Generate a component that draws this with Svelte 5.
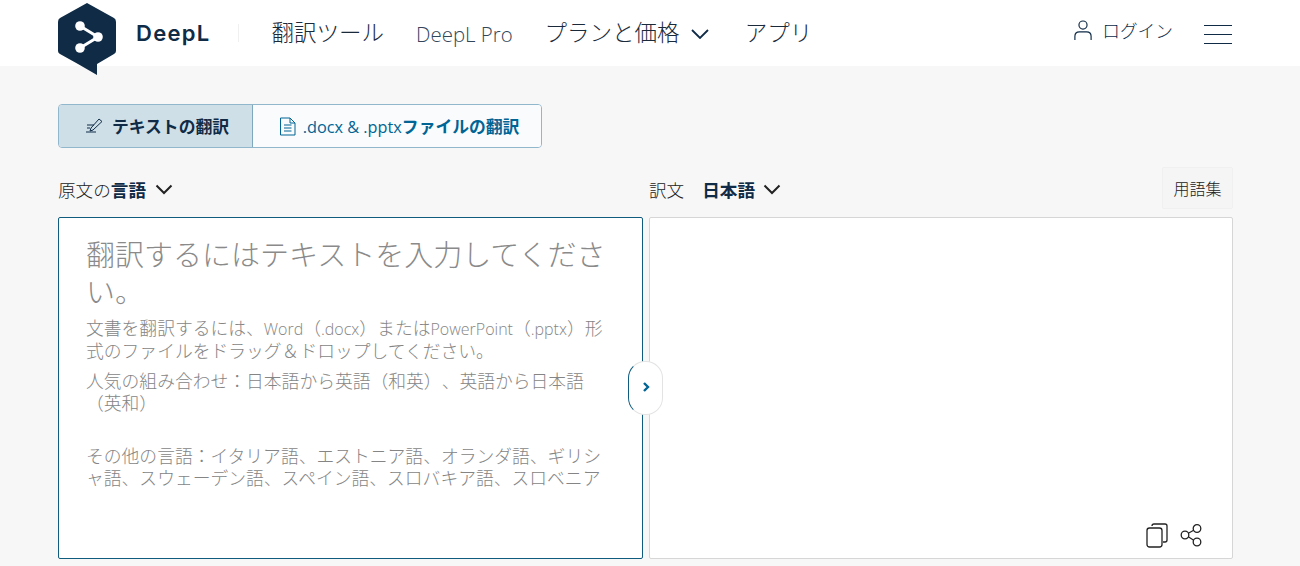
<script>
    const langs = 'その他の言語\uFF1Aイタリア語、エストニア語、オランダ語、ギリシャ語、スウェーデン語、スペイン語、スロバキア語、スロベニア';
    const popular = '人気の組み合わせ\uFF1A日本語から英語\uFF08和英\uFF09、英語から日本語\uFF08英和\uFF09';
</script>

<div class="page">
    <header class="topbar">
        <div class="brand">
            <svg class="logo" viewBox="0 0 58 72" width="58" height="72">
                <path d="M29 0 L56 15 Q58 16 58 19 V48 Q58 50 56 51 L39 61 V72 L20 61 L2 51 Q0 50 0 48 V19 Q0 16 2 15 Z" fill="#0f2b46"/>
                <path d="M22 23 L40 34 L22 45" fill="none" stroke="#fff" stroke-width="3"/>
                <circle cx="22" cy="23" r="4.800" fill="#fff"/>
                <circle cx="40" cy="34" r="4.800" fill="#fff"/>
                <circle cx="22" cy="45" r="4.800" fill="#fff"/>
            </svg>
            <span class="brand-name">DeepL</span>
        </div>
        <nav class="nav">
            <span class="nav-item">翻訳ツール</span>
            <span class="nav-item pro">DeepL Pro</span>
            <span class="nav-item plans">プランと価格
                <svg width="18" height="10" viewBox="0 0 18 10"><path d="M1 1 L9 9 L17 1" fill="none" stroke="#0f2b46" stroke-width="1.800"/></svg>
            </span>
            <span class="nav-item apps">アプリ</span>
        </nav>
        <div class="account">
            <svg width="18" height="22" viewBox="0 0 20 24">
                <circle cx="10" cy="6.500" r="4.500" fill="none" stroke="#0f2b46" stroke-width="1.300"/>
                <path d="M1 23 V19 Q1 14 6 14 H14 Q19 14 19 19 V23" fill="none" stroke="#0f2b46" stroke-width="1.300"/>
            </svg>
            <span>ログイン</span>
        </div>
        <div class="burger"><i></i><i></i><i></i></div>
    </header>

    <main class="content">
        <div class="tabs">
            <div class="tab active">
                <svg width="18" height="18" viewBox="0 0 18 18">
                    <path d="M6 11 L14 2 L17 4.500 L8 13 L5 14 Z M2 8 H9 M2 11 H5 M1 15 H11" fill="none" stroke="#0f2b46" stroke-width="1"/>
                </svg>
                <span>テキストの翻訳</span>
            </div>
            <div class="tab file">
                <svg width="17" height="19" viewBox="0 0 17 19">
                    <path d="M1.500 1 H11 L16 6 V18 H1.500 Z M11 1 V6 H16 M5 8 H12.500 M5 11 H12.500 M5 14 H12.500" fill="none" stroke="#006494" stroke-width="1"/>
                </svg>
                <span class="tab-label"><span class="latin">.docx &amp; .pptx</span><span>ファイルの翻訳</span></span>
            </div>
        </div>

        <div class="columns">
            <section class="col">
                <div class="lang-row source-row">
                    <span class="lang">原文の<b>言語</b></span>
                    <svg class="chev" width="18" height="11" viewBox="0 0 18 11"><path d="M1.500 1.500 L9 9 L16.500 1.500" fill="none" stroke="#222" stroke-width="2"/></svg>
                </div>
                <div class="panel source">
                    <div class="placeholder">翻訳するにはテキストを入力してください。</div>
                    <p>文書を翻訳するには、<span class="latin">Word</span>&#xFF08;<span class="latin">.docx</span>&#xFF09;または<span class="latin">PowerPoint</span>&#xFF08;<span class="latin">.pptx</span>&#xFF09;形式のファイルをドラッグ&#xFF06;ドロップしてください。</p>
                    <p>{popular}</p>
                    <p class="others">{langs}</p>
                </div>
            </section>

            <section class="col">
                <div class="lang-row target">
                    <span class="lang">訳文</span>
                    <b class="lang-name">日本語</b>
                    <svg class="chev" width="18" height="11" viewBox="0 0 18 11"><path d="M1.500 1.500 L9 9 L16.500 1.500" fill="none" stroke="#222" stroke-width="2"/></svg>
                    <button class="glossary">用語集</button>
                </div>
                <div class="panel result">
                    <div class="actions">
                        <svg width="24" height="26" viewBox="0 0 24 26">
                            <path d="M7 4 Q7 2 9 2 H20 Q22 2 22 4 V18 Q22 20 20 20 H18" fill="none" stroke="#222" stroke-width="1.300"/>
                            <rect x="2" y="6" width="15" height="19" rx="2.500" fill="#fff" stroke="#222" stroke-width="1.300"/>
                        </svg>
                        <svg width="24" height="24" viewBox="0 0 24 24">
                            <circle cx="17" cy="5.500" r="3.800" fill="none" stroke="#222" stroke-width="1.300"/>
                            <circle cx="5" cy="12" r="3.800" fill="none" stroke="#222" stroke-width="1.300"/>
                            <circle cx="17" cy="19" r="3.800" fill="none" stroke="#222" stroke-width="1.300"/>
                            <path d="M8.300 10.200 L13.700 7.300 M8.300 13.800 L13.700 17.200" stroke="#222" stroke-width="1.300"/>
                        </svg>
                    </div>
                </div>
            </section>

            <div class="swap">
                <svg width="8" height="10" viewBox="0 0 8 10"><path d="M2 1 L6 5 L2 9" fill="none" stroke="#006494" stroke-width="2.400"/></svg>
            </div>
        </div>
    </main>
</div>

<style>
    :global(body) {
        margin: 0;
    }
    .page {
        width: 1300px;
        height: 566px;
        overflow: hidden;
        background: #f7f7f7;
        font-family: "Open Sans", "Noto Sans CJK JP", sans-serif;
        color: #0f2b46;
    }
    .topbar {
        height: 66px;
        background: #fff;
        display: flex;
        align-items: center;
        padding: 0 68px 0 58px;
        box-sizing: border-box;
        position: relative;
    }
    .brand {
        display: flex;
        align-items: center;
        gap: 20px;
        height: 100%;
    }
    .logo {
        margin-top: 12px;
        position: relative;
        z-index: 2;
    }
    .brand-name {
        font-family: Inter, sans-serif;
        font-size: 22px;
        font-weight: 600;
        letter-spacing: 1.300px;
        padding-right: 28px;
        position: relative;
    }
    .brand-name::after {
        content: '';
        position: absolute;
        right: 0;
        top: 4px;
        bottom: 4px;
        width: 1px;
        background: #f0f0f0;
    }
    .nav {
        display: flex;
        align-items: center;
        gap: 33px;
        margin-left: 33px;
        padding-bottom: 4px;
        font-size: 22.500px;
        font-weight: 300;
        color: #1a2a3a;
    }
    .nav-item.pro {
        font-size: 20.400px;
        color: #33475b;
        margin-top: 6px;
        margin-left: -1px;
    }
    .nav-item.plans {
        display: flex;
        align-items: center;
        gap: 11px;
        margin-left: -1px;
    }
    .nav-item.plans svg {
        margin-top: 5px;
    }
    .nav-item.apps {
        margin-left: 3px;
    }
    .account {
        display: flex;
        align-items: center;
        gap: 10px;
        margin-left: auto;
        padding-bottom: 6px;
        font-size: 17.700px;
        font-weight: 300;
    }
    .burger {
        width: 28px;
        margin-left: 31px;
        display: flex;
        flex-direction: column;
        gap: 8px;
        margin-top: 2px;
    }
    .burger i {
        display: block;
        height: 1px;
        background: #0f2b46;
    }
    .content {
        padding: 38px 67px 0 58px;
    }
    .tabs {
        display: inline-flex;
        height: 44px;
        box-sizing: border-box;
        border: 1px solid #91b7cc;
        border-radius: 4px;
        overflow: hidden;
        font-size: 16.800px;
        font-weight: 700;
        color: #006494;
        vertical-align: top;
    }
    .tab {
        display: flex;
        align-items: center;
        justify-content: center;
        gap: 8px;
        background: #f9fbfc;
        width: 288px;
        box-sizing: border-box;
    }
    .tab.file {
        gap: 7px;
        padding-left: 4px;
    }
    .tab .latin {
        font-size: 16.300px;
        font-weight: 400;
    }
    .tab-label {
        display: flex;
        align-items: baseline;
    }
    .tab.active {
        width: 194px;
        gap: 9px;
        padding-left: 3px;
        background: #cfdfe8;
        color: #0f2b46;
        border-right: 1px solid #7fa8bf;
    }
    .columns {
        display: grid;
        grid-template-columns: 585px 584px;
        gap: 6px;
        position: relative;
        margin-top: 19px;
    }
    .lang-row {
        height: 50px;
        display: flex;
        align-items: center;
        gap: 8px;
        font-size: 17.600px;
        font-weight: 300;
        color: #222;
        box-sizing: border-box;
        padding-bottom: 6px;
    }
    .source-row {
        gap: 9px;
    }
    .lang b {
        font-weight: 700;
        color: #0f2b46;
    }
    .lang-name {
        font-weight: 700;
        color: #0f2b46;
        margin-left: 10px;
    }
    .glossary {
        margin-left: auto;
        width: 71px;
        height: 42px;
        background: #f5f5f5;
        border: 1px solid #f0f0f0;
        border-radius: 2px;
        font: inherit;
        font-size: 16px;
        color: #222;
        padding: 0;
        position: relative;
        top: -1px;
    }
    .panel {
        height: 342px;
        box-sizing: border-box;
        background: #fff;
        border-radius: 2px;
        position: relative;
    }
    .source {
        border: 1px solid #0f5c7f;
        padding: 18px 28px 0 27px;
        color: #858585;
        font-weight: 300;
        text-spacing-trim: space-all;
    }
    .placeholder {
        font-size: 29px;
        line-height: 37px;
        color: #8a8a8a;
        margin-bottom: 7px;
    }
    .source p {
        margin: 0 0 8px;
        font-size: 17.800px;
        line-height: 22px;
    }
    .source .latin {
        font-size: 16px;
    }
    .source p.others {
        margin-top: 31px;
    }
    .result {
        border: 1px solid #d6d6d6;
    }
    .actions {
        position: absolute;
        right: 28px;
        bottom: 10px;
        display: flex;
        align-items: center;
        gap: 11px;
    }
    .swap {
        position: absolute;
        left: 570px;
        top: 194px;
        width: 35px;
        height: 54px;
        box-sizing: border-box;
        padding-bottom: 3px;
        background: #fff;
        border: 1px solid #e3e3e3;
        border-left-color: #0f5c7f;
        border-radius: 17px;
        display: flex;
        align-items: center;
        justify-content: center;
    }
</style>
